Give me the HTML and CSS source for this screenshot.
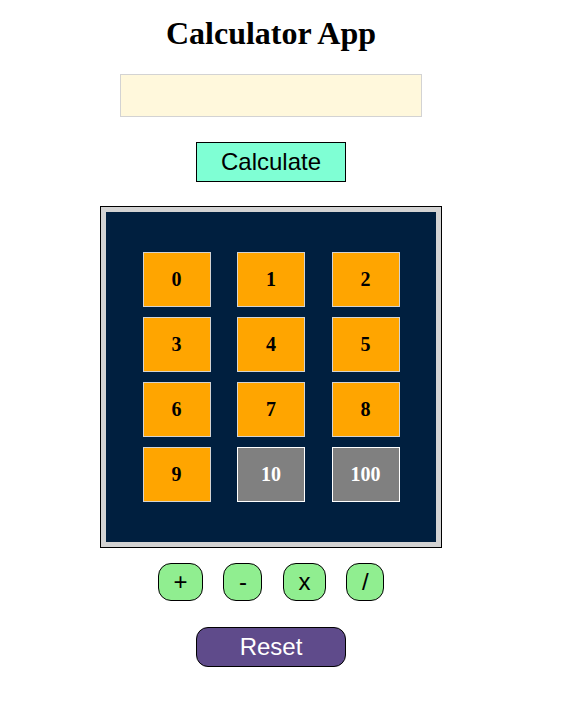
FILE: index.html
```html
<!DOCTYPE html>
<html>
<head>
<meta charset="utf-8">
<title>Calculator App</title>
<link rel="stylesheet" href="styles.css">
</head>
<body>
<div class="app">
  <h1 class="title">Calculator App</h1>
  <input class="display" type="text">
  <button class="calc">Calculate</button>
  <div class="pad-frame">
    <div class="pad">
      <button class="key">0</button>
      <button class="key">1</button>
      <button class="key">2</button>
      <button class="key">3</button>
      <button class="key">4</button>
      <button class="key">5</button>
      <button class="key">6</button>
      <button class="key">7</button>
      <button class="key">8</button>
      <button class="key">9</button>
      <button class="key key-grey">10</button>
      <button class="key key-grey">100</button>
    </div>
  </div>
  <div class="ops">
    <button class="op">+</button>
    <button class="op">-</button>
    <button class="op">x</button>
    <button class="op">/</button>
  </div>
  <button class="reset">Reset</button>
</div>
</body>
</html>
```

FILE: styles.css
```css
html, body {
  margin: 0;
  padding: 0;
  background: #ffffff;
}

.app {
  width: 542px;
  padding-top: 15px;
  display: flex;
  flex-direction: column;
  align-items: center;
}

.title {
  margin: 0;
  font-family: "Liberation Serif", "Times New Roman", serif;
  font-weight: bold;
  font-size: 32px;
  line-height: 36px;
  color: #000;
}

.display {
  box-sizing: border-box;
  margin-top: 23px;
  width: 302px;
  height: 43px;
  background: #fff8dc;
  border: 1px solid #d3d3d3;
  padding: 0 6px;
  outline: none;
}

.calc {
  box-sizing: border-box;
  margin-top: 25px;
  width: 150px;
  height: 40px;
  background: #7fffd4;
  border: 1px solid #000;
  font-family: "Liberation Sans", Arial, sans-serif;
  font-size: 24px;
  color: #000;
  padding: 0;
}

.pad-frame {
  margin-top: 24px;
  border: 1px solid #000;
  background: #d3d3d3;
  padding: 5px;
}

.pad {
  width: 330px;
  box-sizing: border-box;
  background: #001f3f;
  padding: 40px 0;
  display: grid;
  grid-template-columns: repeat(3, 68px);
  grid-auto-rows: 55px;
  column-gap: 26.5px;
  row-gap: 10px;
  justify-content: center;
}

.key {
  box-sizing: border-box;
  background: #ffa500;
  border: 1px solid #d3d3d3;
  font-family: "Liberation Serif", "Times New Roman", serif;
  font-weight: bold;
  font-size: 20px;
  color: #000;
  padding: 0;
}

.key-grey {
  background: #808080;
  border-color: #ffffff;
  color: #ffffff;
}

.ops {
  margin-top: 15px;
  display: flex;
  gap: 20.5px;
}

.op {
  box-sizing: border-box;
  height: 38px;
  padding: 0 14.5px;
  background: #90ee90;
  border: 1px solid #000;
  border-radius: 13px;
  font-family: "Liberation Sans", Arial, sans-serif;
  font-size: 24px;
  color: #000;
}

.reset {
  box-sizing: border-box;
  margin-top: 26px;
  width: 150px;
  height: 40px;
  background: #5f4b8b;
  border: 1px solid #000;
  border-radius: 12px;
  font-family: "Liberation Sans", Arial, sans-serif;
  font-size: 24px;
  color: #ffffff;
  padding: 0;
}
```
